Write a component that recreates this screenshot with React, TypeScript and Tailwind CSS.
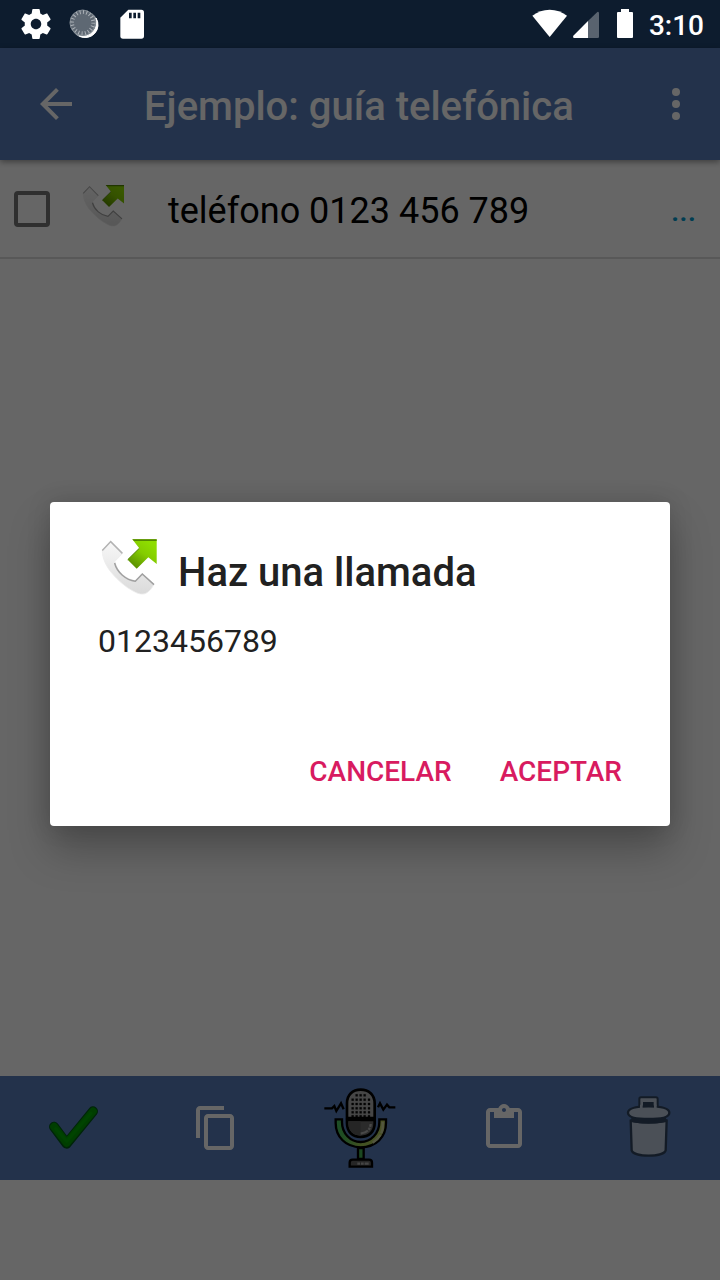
import React from "react";

function CallIcon({ id, className }: { id: string; className: string }) {
  return (
    <svg viewBox="0 0 64 64" className={className} aria-hidden="true">
      <defs>
        <linearGradient id={id + "-handset"} x1="0" y1="0" x2="0" y2="1">
          <stop offset="0" stopColor="#f8f8f8" />
          <stop offset="0.5" stopColor="#e9e9e9" />
          <stop offset="1" stopColor="#dadada" />
        </linearGradient>
        <linearGradient id={id + "-arrow"} x1="0.75" y1="0.1" x2="0.2" y2="0.9">
          <stop offset="0" stopColor="#8fdd00" />
          <stop offset="0.45" stopColor="#84cc00" />
          <stop offset="1" stopColor="#5c9200" />
        </linearGradient>
      </defs>
      <path
        d="M12.7 7.3 4.3 16.500C4.300 24 8 32.500 14 39.300 20 46.500 28 53.500 36 57.500 40 60 45 60.800 48 59.300 51.500 57.500 54 54 56 50.300L44.300 39.500 37.500 46.700C28 45.500 19 37.500 16.800 27.500L24.400 19.600Z"
        fill={"url(#" + id + "-handset)"}
        stroke="#ececec"
        strokeWidth="0.8"
      />
      <path d="M4.300 16.500 12.700 7.600 24.400 19.400" fill="none" stroke="#b3b3b3" strokeWidth="1.500" />
      <path
        d="M16.600 29C19 38.500 28 46 37.300 47.200L44.300 40 56 50.600"
        fill="none"
        stroke="#a0a0a0"
        strokeWidth="1.500"
      />
      <path
        d="M34.300 5.300H58.700V30L50.300 23.300 38.700 34.700 29.700 25.700 41.300 14.300Z"
        fill={"url(#" + id + "-arrow)"}
      />
      <path d="M34.300 5.300H58.700V6.900H36Z" fill="#528500" />
      <path d="M29.700 25.700 41.300 14.300" stroke="#4f8200" strokeWidth="1" />
    </svg>
  );
}

function StatusBar() {
  return (
    <header className="flex h-12 items-center justify-between bg-[#0d1c2e] pr-4 pl-[18px]">
      <div className="flex items-center gap-3">
        <svg viewBox="0 0 24 24" className="size-9" fill="#fff" aria-hidden="true">
          <path d="M19.43 12.98c.04-.32.07-.64.07-.98s-.03-.66-.07-.98l2.11-1.65c.19-.15.24-.42.12-.64l-2-3.46c-.12-.22-.39-.3-.61-.22l-2.490 1c-.52-.4-1.080-.73-1.690-.98l-.38-2.650C14.460 2.180 14.250 2 14 2h-4c-.25 0-.46.180-.49.420l-.38 2.650c-.61.25-1.170.59-1.690.98l-2.490-1c-.23-.09-.49 0-.61.22l-2 3.460c-.13.22-.07.49.12.64l2.110 1.650c-.04.32-.07.65-.07.98s.03.66.07.98l-2.110 1.650c-.19.15-.24.42-.12.64l2 3.460c.12.22.39.3.61.22l2.490-1c.52.4 1.080.73 1.690.98l.38 2.650c.03.24.24.42.49.42h4c.25 0 .46-.18.49-.42l.38-2.650c.61-.25 1.170-.59 1.690-.98l2.490 1c.23.09.49 0 .61-.22l2-3.460c.12-.22.07-.49-.12-.64l-2.110-1.650zM12 15.500c-1.930 0-3.500-1.570-3.500-3.500s1.570-3.500 3.500-3.500 3.500 1.570 3.500 3.500-1.570 3.500-3.500 3.500z" />
        </svg>
        <svg viewBox="198 18 108 108" className="size-9" aria-hidden="true">
          <circle cx="254" cy="74" r="40" fill="#9aa1a8" />
          <path d="M288 54A38 38 0 0 1 238 108 42 42 0 0 0 288 54Z" fill="#fff" stroke="#fff" strokeWidth="3" />
          <circle cx="248" cy="68" r="39" fill="#5e6873" />
          <circle cx="248" cy="68" r="32" fill="none" stroke="#aeb3b9" strokeWidth="12" strokeDasharray="3 7.050" />
          <circle cx="248" cy="68" r="38" fill="none" stroke="#8d959d" strokeWidth="2" />
        </svg>
        <svg viewBox="342 18 108 108" className="size-9" aria-hidden="true">
          <path d="M385 29H424Q432 29 432 37V108Q432 116 424 116H369Q361 116 361 108V53Z" fill="#fff" />
          <path d="M387 38h8v17h-8zM400 38h8v17h-8zM413 38h8v17h-8z" fill="#0d1c2e" />
        </svg>
      </div>
      <div className="flex items-center">
        <svg viewBox="156 18 108 108" className="size-9" aria-hidden="true">
          <path d="M209 111 157 47Q180 29 209 29T261 47Z" fill="#fff" />
        </svg>
        <svg viewBox="276 18 84 108" className="ml-1 h-9 w-7" aria-hidden="true">
          <path d="M324 63 352 36Q357 34 357 40V110Q357 114 353 114H324Z" fill="#59636f" />
          <path d="M324 63V114H282Q277 112 280 107Z" fill="#fff" />
        </svg>
        <svg viewBox="408 18 54 108" className="ml-4 h-9 w-[18px]" aria-hidden="true">
          <path d="M423 27H447V36H456Q459 36 459 39V111Q459 114 456 114H414Q411 114 411 111V39Q411 36 414 36H423Z" fill="#fff" />
        </svg>
        <time className="ml-[15px] pt-[3px] text-[28px] leading-8 font-medium text-white">3:10</time>
      </div>
    </header>
  );
}

function Toolbar() {
  return (
    <div className="relative flex h-28 items-center bg-[#577dbb] pr-5 pl-8 text-white shadow-[0_2px_6px_rgba(0,0,0,0.4)]">
      <button type="button" aria-label="Volver">
        <svg viewBox="0 0 24 24" className="size-12" fill="currentColor">
          <path d="M20 11H7.830l5.590-5.590L12 4l-8 8 8 8 1.410-1.410L7.830 13H20v-2z" />
        </svg>
      </button>
      <h1 className="ml-16 flex-1 pt-[6px] text-[40px] leading-[48px] font-medium whitespace-nowrap">
        Ejemplo: guía telefónica
      </h1>
      <button type="button" aria-label="Más opciones">
        <svg viewBox="0 0 24 24" className="size-12" fill="currentColor">
          <circle cx="12" cy="6" r="2" />
          <circle cx="12" cy="12" r="2" />
          <circle cx="12" cy="18" r="2" />
        </svg>
      </button>
    </div>
  );
}

function MicIcon() {
  return (
    <svg viewBox="30 38 240 240" className="size-20" aria-hidden="true">
      <defs>
        <linearGradient id="mic-arc" x1="0" x2="1">
          <stop offset="0" stopColor="#4bc465" />
          <stop offset="0.15" stopColor="#4fbf58" />
          <stop offset="0.5" stopColor="#a3cc55" />
          <stop offset="1" stopColor="#bccb60" />
        </linearGradient>
      </defs>
      <path d="M43 99H66L73 92 79 107 93 84 101 102M204 96 210 84 220 103 231 88 238 96H256" fill="none" stroke="#000" strokeWidth="7" />
      <path d="M77 132H96V141C96 174 121 200 152 200S208 174 208 141V132H228V143C228 185 198 215 152 216 107 215 77 185 77 143Z" fill="url(#mic-arc)" stroke="#000" strokeWidth="7" />
      <path d="M188 202Q212 188 218 160V139" fill="none" stroke="#d0d8a0" strokeWidth="7" strokeDasharray="34 5" />
      <path d="M111 128V84C111 58 128 43 152 43S194 58 194 84V128Z" fill="#b0b0b0" stroke="#000" strokeWidth="8" />
      <path
        d="M137 57h6v6h-6zM149 57h6v6h-6zM161 57h6v6h-6zM125 70h6v6h-6zM137 70h6v6h-6zM149 70h6v6h-6zM161 70h6v6h-6zM174 70h6v6h-6zM125 83h6v6h-6zM137 83h6v6h-6zM149 83h6v6h-6zM161 83h6v6h-6zM174 83h6v6h-6zM125 96h6v6h-6zM137 96h6v6h-6zM149 96h6v6h-6zM161 96h6v6h-6zM174 96h6v6h-6zM125 108h6v6h-6zM137 108h6v6h-6zM149 108h6v6h-6zM161 108h6v6h-6zM174 108h6v6h-6zM125 120h6v6h-6zM137 120h6v6h-6zM149 120h6v6h-6zM161 120h6v6h-6zM174 120h6v6h-6z"
        fill="#0a0a0a"
        stroke="#0a0a0a"
        strokeWidth="1"
      />
      <path d="M111 134H194V144C194 169 177 185 152 185S111 169 111 144Z" fill="#6c6c6c" stroke="#000" strokeWidth="8" />
      <path d="M115 138H152V181C130 181 115 167 115 144Z" fill="#5e5e5e" />
      <path d="M152 175Q180 171 182 146" fill="none" stroke="#b4b4b4" strokeWidth="7" strokeDasharray="24 3 7 3" />
      <path d="M144 218H161V251H144Z" fill="#45b350" stroke="#000" strokeWidth="7" />
      <path d="M119 274V262Q119 253 128 253H177Q186 253 186 262V274Z" fill="#606060" stroke="#000" strokeWidth="7" />
      <path d="M142 265H178" stroke="#b0b0b0" strokeWidth="7" strokeDasharray="8 3 8 3 12" />
    </svg>
  );
}

function BottomBar() {
  const cell = "flex flex-1 items-center justify-center";
  return (
    <nav className="flex h-[104px] bg-[#577dbb] text-white" aria-label="Acciones">
      <button type="button" aria-label="Confirmar" className={cell}>
        <svg viewBox="120 78 192 192" className="size-16">
          <path d="M162 170 200 221 279 124" fill="none" stroke="#005a18" strokeWidth="30" strokeLinecap="round" strokeLinejoin="round" />
          <path d="M162 170 200 219 279 124" fill="none" stroke="#009c00" strokeWidth="23" strokeLinecap="round" strokeLinejoin="round" />
          <path d="M167 176 200 214 273 130" fill="none" stroke="#00c000" strokeWidth="9" strokeLinecap="round" strokeLinejoin="round" opacity="0.4" />
        </svg>
      </button>
      <button type="button" aria-label="Copiar" className={cell}>
        <svg viewBox="0 0 24 24" className="size-12" fill="currentColor">
          <path d="M16 1H4c-1.100 0-2 .9-2 2v14h2V3h12V1zm3 4H8c-1.100 0-2 .9-2 2v14c0 1.100.9 2 2 2h11c1.100 0 2-.9 2-2V7c0-1.100-.9-2-2-2zm0 16H8V7h11v14z" />
        </svg>
      </button>
      <button type="button" aria-label="Dictar" className={cell}>
        <MicIcon />
      </button>
      <button type="button" aria-label="Pegar" className={cell}>
        <svg viewBox="0 0 24 24" className="size-12" fill="currentColor">
          <path d="M19 2h-4.180C14.400.84 13.300 0 12 0c-1.300 0-2.400.84-2.820 2H5c-1.100 0-2 .9-2 2v16c0 1.100.9 2 2 2h14c1.100 0 2-.9 2-2V4c0-1.100-.9-2-2-2zm-7 0c.55 0 1 .45 1 1s-.45 1-1 1-1-.45-1-1 .45-1 1-1zm7 18H5V4h2v3h10V4h2v16z" />
        </svg>
      </button>
      <button type="button" aria-label="Eliminar" className={cell}>
        <svg viewBox="468 78 192 192" className="size-16" strokeLinejoin="round">
          <path d="M512 151C530 159 602 159 620 151L617 241C610 262 522 262 515 241Z" fill="#bbc8da" stroke="#31455f" strokeWidth="7" />
          <path d="M513 149Q565 162 619 149" fill="none" stroke="#31455f" strokeWidth="12" />
          <path d="M538 114V87Q538 82 543 82H588Q593 82 593 87V114Z" fill="#bbc8da" stroke="#31455f" strokeWidth="6" />
          <path d="M549 96H581V116H549Z" fill="#31455f" />
          <path d="M504 128C504 116 526 109 566 109S628 116 628 128 612 147 566 147 504 140 504 128Z" fill="#bbc8da" stroke="#31455f" strokeWidth="7" />
          <path d="M540 104H548V118H540ZM582 104H590V118H582Z" fill="#bbc8da" />
        </svg>
      </button>
    </nav>
  );
}

function CallDialog() {
  return (
    <div className="absolute inset-0 flex items-center justify-center bg-black/60 px-[50px]">
      <section
        role="dialog"
        aria-modal="true"
        aria-labelledby="dialog-title"
        className="w-full rounded bg-white px-12 pt-8 pb-[18px] text-[#212121] shadow-[0_24px_40px_rgba(0,0,0,0.26),0_0_24px_rgba(0,0,0,0.14)]"
      >
        <div className="flex items-start gap-4">
          <CallIcon id="dialog-call" className="size-16" />
          <h2 id="dialog-title" className="pt-[15px] text-[40px] leading-[48px] font-medium">
            Haz una llamada
          </h2>
        </div>
        <p className="mt-6 text-[32px] leading-[38px]">0123456789</p>
        <div className="mt-[76px] flex justify-end gap-12 text-[28px] leading-8 font-medium text-[#d81b60]">
          <button type="button" className="py-5">CANCELAR</button>
          <button type="button" className="py-5">ACEPTAR</button>
        </div>
      </section>
    </div>
  );
}

export default function App() {
  return (
    <div className="flex min-h-screen flex-col bg-white font-['Roboto',sans-serif]">
      <StatusBar />
      <div className="relative flex flex-1 flex-col">
        <Toolbar />
        <main className="flex-1">
          <ul>
            <li className="flex h-[99px] items-center border-b-2 border-[#dcdcdc] pr-6 pl-[14px]">
              <input
                id="phone-entry"
                type="checkbox"
                className="size-9 appearance-none rounded border-4 border-[#757575]"
              />
              <CallIcon id="row-call" className="mb-2 ml-[30px] size-12" />
              <label htmlFor="phone-entry" className="ml-10 flex-1 pt-1 text-[36px] leading-[44px] text-black">
                teléfono 0123 456 789
              </label>
              <button type="button" aria-label="Detalles" className="pt-1 text-[30px] leading-9 font-medium text-[#0099cc]">
                ...
              </button>
            </li>
          </ul>
        </main>
        <BottomBar />
        <div className="h-[100px]" />
        <CallDialog />
      </div>
    </div>
  );
}
